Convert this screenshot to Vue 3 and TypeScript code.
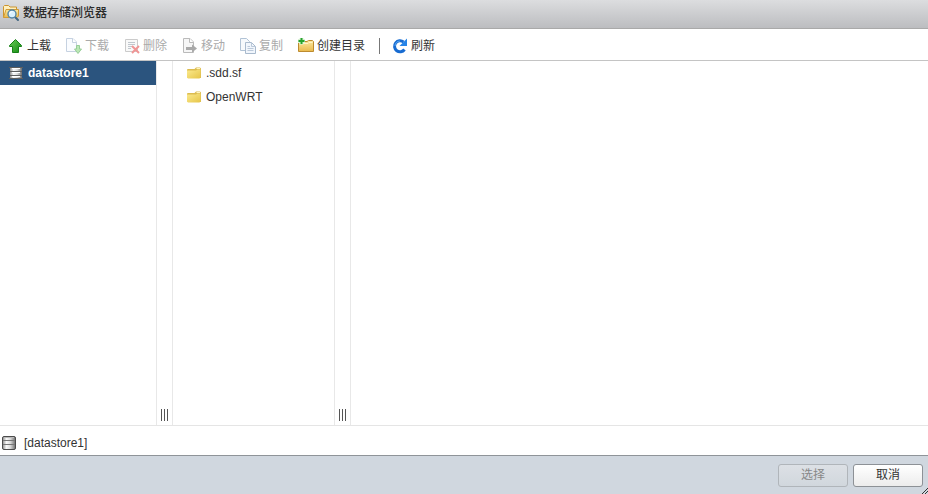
<script setup lang="ts">
import { ref } from 'vue'

interface Action {
  id: string
  label: string
  disabled: boolean
}

const actions: Action[] = [
  { id: 'upload', label: '上载', disabled: false },
  { id: 'download', label: '下载', disabled: true },
  { id: 'delete', label: '删除', disabled: true },
  { id: 'move', label: '移动', disabled: true },
  { id: 'copy', label: '复制', disabled: true },
  { id: 'create', label: '创建目录', disabled: false },
  { id: 'refresh', label: '刷新', disabled: false },
]
const datastores = ['datastore1']
const folders = ['.sdd.sf', 'OpenWRT']
const selected = ref('datastore1')
</script>

<template>
  <div class="browser">
    <svg class="defs" aria-hidden="true">
      <defs>
        <linearGradient id="green" x1="0" y1="0" x2="1" y2="1">
          <stop offset="0" stop-color="#6ccb58" /><stop offset="1" stop-color="#128a12" />
        </linearGradient>
        <linearGradient id="gold" x1="0" y1="0" x2="0" y2="1">
          <stop offset="0" stop-color="#fbe9a0" /><stop offset="1" stop-color="#e9b94c" />
        </linearGradient>
        <linearGradient id="yellow" x1="0" y1="0" x2="1" y2="1">
          <stop offset="0" stop-color="#fbea8e" /><stop offset="1" stop-color="#e6c549" />
        </linearGradient>
        <linearGradient id="metal" x1="0" y1="0" x2="1" y2="0">
          <stop offset="0" stop-color="#8a8a8a" /><stop offset="0.3" stop-color="#fafafa" />
          <stop offset="0.6" stop-color="#dcdcdc" /><stop offset="1" stop-color="#6c6c6c" />
        </linearGradient>
        <symbol id="store" viewBox="0 0 16 16">
          <path d="M1.500 3Q1.500 1.500 3 1.500H13Q14.500 1.500 14.500 3V13Q14.500 14.500 13 14.500H3Q1.500 14.500 1.500 13Z" fill="url(#metal)" stroke="#4c4c4c" />
          <path d="M2 5.500H14M2 9.500H14" stroke="#777" />
          <path d="M3 2.500H13" stroke="#bbb" />
        </symbol>
        <symbol id="store-bare" viewBox="0 0 16 16">
          <path d="M2 2H14V14H2Z" fill="url(#metal)" />
          <path d="M1 2.500H15M2 6.500H14M2 10.500H14M1 13.500H15" stroke="#5d5d5d" />
          <path d="M4 3.500H12M4 7.500H12M4 11.500H12" stroke="#fff" />
        </symbol>
        <symbol id="folder" viewBox="0 0 16 16">
          <path d="M1 5Q1 4 2 4H8.500L10 2.500H14L15 3.500V13H2L1 12Z" fill="#dcbc50" />
          <path d="M1 5.500H10L11.500 4.500H14.500V12.500L13.500 13.500H2L1 12.500Z" fill="url(#yellow)" />
          <path d="M10.500 3.500H14" stroke="#fff5bd" />
        </symbol>
      </defs>
    </svg>

    <header class="title-bar">
      <svg class="icon title-icon" viewBox="0 0 18 18" aria-hidden="true">
        <path d="M.5 13.500V2.500L1.500 1.500H5.500L7 3H13.500V6" fill="#fff0bd" stroke="#cc942e" />
        <path d="M.5 13.500L3 5.500H15.500V12L14 13.500Z" fill="url(#gold)" stroke="#d29b35" />
        <path d="M11.500 12.500L15 16" stroke="#426783" stroke-width="2" stroke-linecap="round" />
        <circle cx="9" cy="10" r="4" fill="#d9f1ff" stroke="#5486a6" stroke-width="1.400" />
        <path d="M6.500 10Q7 7.500 9.500 7.500" fill="none" stroke="#fff" />
      </svg>
      <h1>数据存储浏览器</h1>
    </header>

    <nav class="toolbar" aria-label="操作">
      <template v-for="a in actions" :key="a.id">
        <span v-if="a.id === 'refresh'" class="separator"></span>
        <button class="action" type="button" :disabled="a.disabled">
          <svg class="icon" viewBox="0 0 16 16" aria-hidden="true">
            <path v-if="a.id === 'upload'" d="M7.500 1.500L13.500 7.500V8.500H10.500V14.500H4.500V8.500H1.500V7.500Z" fill="url(#green)" stroke="#168016" stroke-linejoin="round" />
            <template v-else-if="a.id === 'download'">
              <path d="M.5 .5H7L10.500 4V13.500H.5Z" fill="#f6faff" stroke="#8fa6c5" />
              <path d="M6.500 .5V4.500H10.500" fill="#fff" stroke="#8fa6c5" />
              <path d="M10.500 7.500H13.500V11H15.500L12 15.500L8.500 11H10.500Z" fill="#77d06b" stroke="#319c32" />
            </template>
            <template v-else-if="a.id === 'delete'">
              <path d="M1.500 1.500H13.500V13.500H1.500Z" fill="#f4f4f4" stroke="#999" />
              <path d="M4 4.500H11M4 6.500H11M4 8.500H8M4 10.500H7" stroke="#83909f" />
              <path d="M8 8L15 15M15 8L8 15" stroke="#e32e2e" stroke-width="2" />
            </template>
            <template v-else-if="a.id === 'move'">
              <path d="M1.500 .5H8L11.500 4V14.500H1.500Z" fill="#eee" stroke="#777" />
              <path d="M7.500 .5V4.500H11.500" fill="#fff" stroke="#777" />
              <path d="M4 9H10V6.500L15 10.500L10 14.500V12H4Z" fill="#555" />
            </template>
            <template v-else-if="a.id === 'copy'">
              <path d="M.5 .5H6.500L9.500 3.500V12.500H.5Z" fill="#eef4fb" stroke="#6688af" />
              <path d="M5.500 4.500H11.500L15.500 8.500V15.500H5.500Z" fill="#e4eefa" stroke="#55779d" />
              <path d="M11.500 4.500V8.500H15.500M7.500 8.500H10M7.500 10.500H13.500M7.500 12.500H13.500" fill="none" stroke="#7995b7" />
            </template>
            <template v-else-if="a.id === 'create'">
              <path d="M.5 13.500V3.500H9L10.500 2.500H14.500L15.500 3.500V13.500Z" fill="url(#gold)" stroke="#bd8b2f" />
              <path d="M2 5.500H10L11 4.500H14.500" fill="none" stroke="#fff4c5" />
              <path d="M3.500 0V6.500M0 3H7" stroke="#d9f3d4" stroke-width="4" />
              <path d="M3.500 0V6M.5 3H6.500" stroke="#26a22c" stroke-width="2" />
            </template>
            <template v-else>
              <path d="M12.500 11.500A5.500 5.500 0 1 1 11.500 4" fill="none" stroke="#176bd1" stroke-width="3" />
              <path d="M15 .5V8H7.500Z" fill="#2684e8" />
              <path d="M3 8A5 5 0 0 1 8 3" fill="none" stroke="#5aa9f3" />
            </template>
          </svg>
          <span>{{ a.label }}</span>
        </button>
      </template>
    </nav>

    <main class="panes">
      <ul class="pane stores">
        <li v-for="d in datastores" :key="d">
          <button type="button" class="row" :class="{ selected: selected === d }" @click="selected = d">
            <svg class="icon" aria-hidden="true"><use href="#store-bare" /></svg>
            <span>{{ d }}</span>
          </button>
        </li>
      </ul>
      <div class="splitter"><span class="grip"></span></div>
      <ul class="pane folders">
        <li v-for="f in folders" :key="f">
          <button type="button" class="row">
            <svg class="icon" aria-hidden="true"><use href="#folder" /></svg>
            <span>{{ f }}</span>
          </button>
        </li>
      </ul>
      <div class="splitter"><span class="grip"></span></div>
      <section class="pane"></section>
    </main>

    <div class="path-bar">
      <svg class="icon" aria-hidden="true"><use href="#store" /></svg>
      <span>[{{ selected }}]</span>
    </div>

    <footer class="footer">
      <button type="button" class="btn" disabled>选择</button>
      <button type="button" class="btn">取消</button>
      <svg class="resize" viewBox="0 0 6 6" aria-hidden="true">
        <path d="M0 6L6 0M3 6L6 3" stroke="#333" />
      </svg>
    </footer>
  </div>
</template>

<style>
body {
  margin: 0;
}
</style>

<style scoped>
.browser {
  display: flex;
  flex-direction: column;
  height: 100vh;
  overflow: hidden;
  background: #fff;
  color: #333;
  font: 12px/16px "Liberation Sans", "Noto Sans CJK SC", sans-serif;
}
.browser * {
  box-sizing: border-box;
}
.defs {
  position: absolute;
  width: 0;
  height: 0;
}
button {
  margin: 0;
  font: inherit;
  color: inherit;
}
.icon {
  flex: none;
  width: 16px;
  height: 16px;
}
.title-bar {
  display: flex;
  align-items: center;
  gap: 2px;
  flex: none;
  height: 29px;
  padding: 0 3px 2px;
  border-bottom: 1px solid #a9a9a9;
  background: linear-gradient(#dcdddf, #bcbdc0);
}
.title-icon {
  width: 18px;
  height: 18px;
}
h1 {
  margin: 0;
  font-size: 12px;
  font-weight: 500;
  color: #2b2b2b;
}
.toolbar {
  display: flex;
  align-items: center;
  gap: 15px;
  flex: none;
  height: 32px;
  padding: 2px 8px 0;
  border-bottom: 1px solid #c4c4c4;
}
.action {
  display: flex;
  align-items: center;
  gap: 3px;
  padding: 0;
  border: 0;
  background: none;
  white-space: nowrap;
}
.action:disabled {
  color: #aaa;
}
.action:disabled .icon {
  opacity: 0.5;
}
.separator {
  width: 1px;
  height: 16px;
  margin: 0 -3px 0 -1px;
  background: #777;
}
.panes {
  display: grid;
  grid-template-columns: 156px 17px 161px 17px 1fr;
  flex: 1;
  min-height: 0;
  border-bottom: 1px solid #e5e5e5;
}
.pane {
  min-width: 0;
  margin: 0;
  padding: 0;
  list-style: none;
}
.row {
  display: flex;
  align-items: center;
  width: 100%;
  height: 24px;
  padding: 0 8px;
  gap: 4px;
  border: 0;
  background: none;
}
.folders .row {
  padding-left: 13px;
}
.row.selected {
  background: #2b547e;
  color: #fff;
  font-weight: 700;
}
.splitter {
  display: flex;
  align-items: flex-end;
  justify-content: center;
  padding-bottom: 4px;
  border: solid #e8e8e8;
  border-width: 0 1px;
}
.grip {
  width: 7px;
  height: 12px;
  background: repeating-linear-gradient(90deg, #555 0 1px, transparent 1px 3px);
}
.path-bar {
  display: flex;
  align-items: center;
  gap: 7px;
  flex: none;
  height: 29px;
  padding: 4px 1px 0;
}
.footer {
  position: relative;
  display: flex;
  align-items: center;
  justify-content: flex-end;
  gap: 5px;
  flex: none;
  height: 39px;
  padding: 0 5px;
  border-top: 1px solid #8f9499;
  background: #d0d7df;
}
.btn {
  width: 70px;
  height: 23px;
  padding: 0;
  border: 1px solid #8d9196;
  border-radius: 3px;
  background: linear-gradient(#fff, #ececec);
  line-height: 20px;
}
.btn:disabled {
  border-color: #b0b5ba;
  background: linear-gradient(#dce0e5, #d1d7dd);
  color: #888;
}
.resize {
  position: absolute;
  right: 0;
  bottom: 0;
  width: 6px;
  height: 6px;
}
</style>
